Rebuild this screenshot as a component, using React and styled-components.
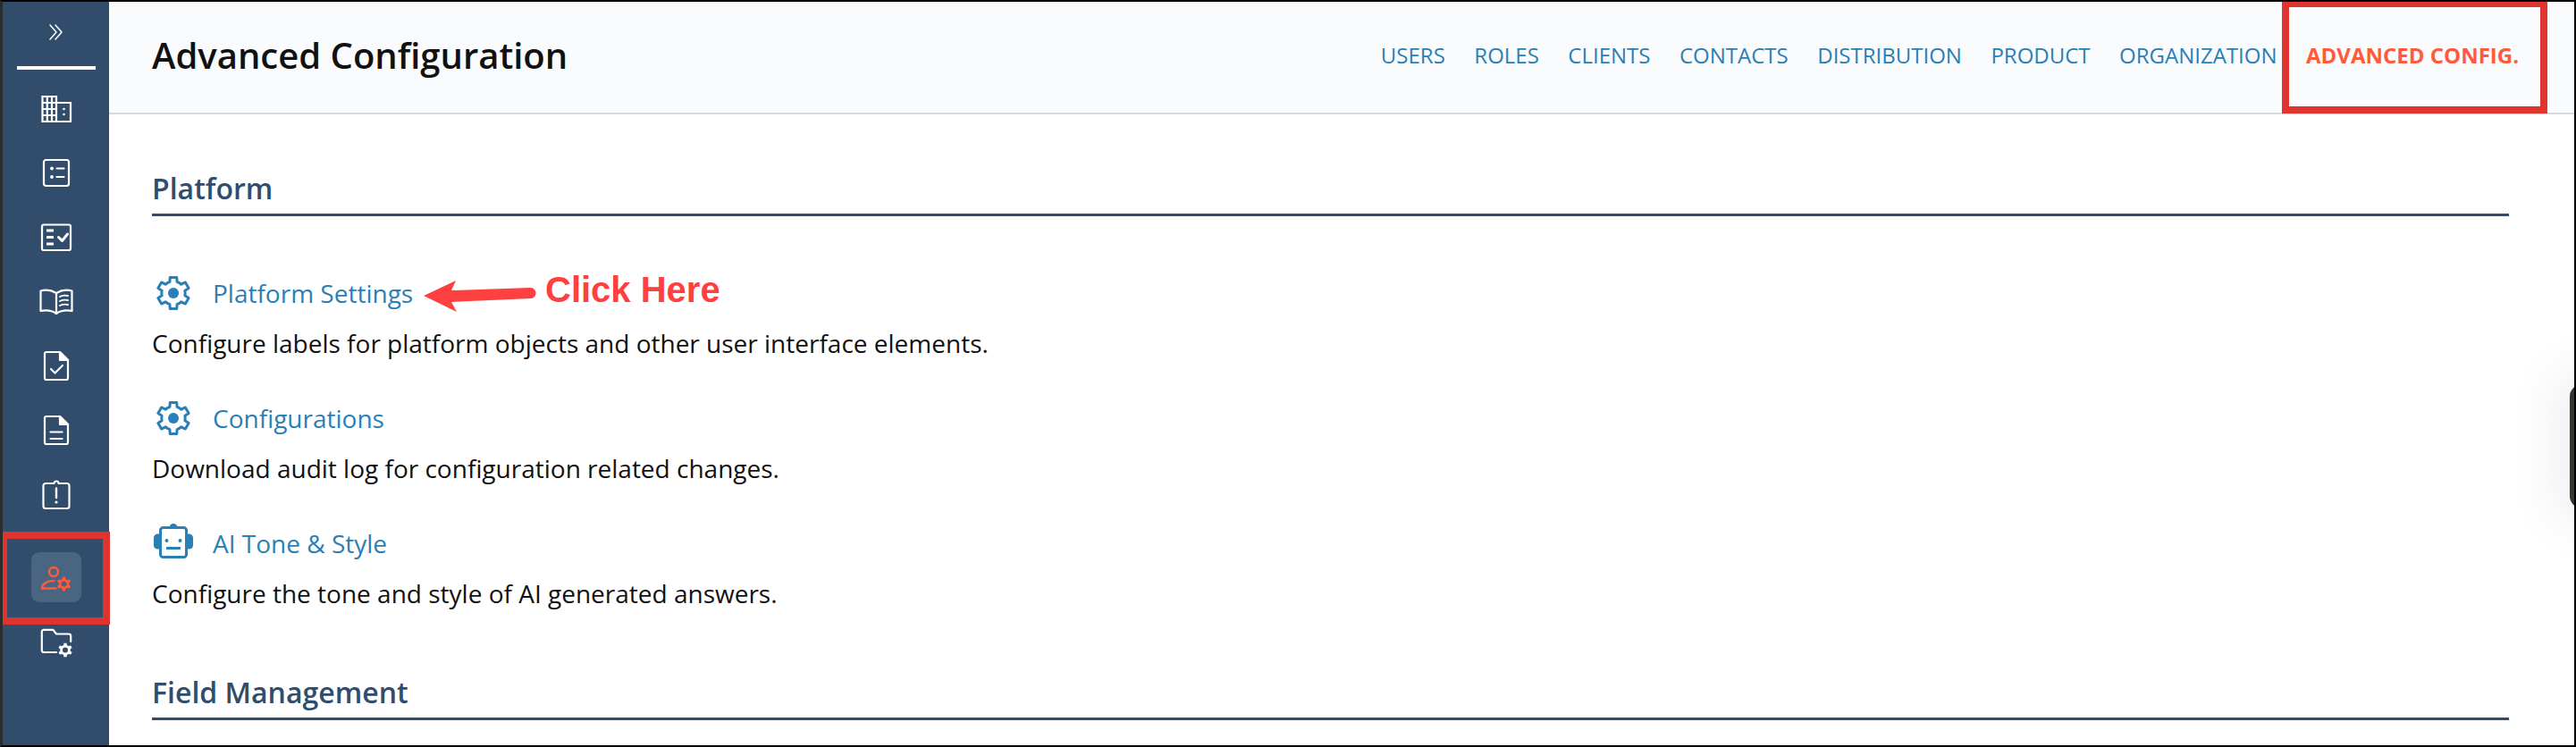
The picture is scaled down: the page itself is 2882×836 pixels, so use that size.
import React from 'react';
import styled, { createGlobalStyle } from 'styled-components';

const Global = createGlobalStyle`
  html, body { margin: 0; padding: 0; background: #fff; }
  * { box-sizing: border-box; }
  body { font-family: "Open Sans", "Liberation Sans", sans-serif; }
`;

const Frame = styled.div`
  position: relative; width: 2882px; height: 836px; overflow: hidden; display: flex; background: #fff;
  border-top: 2px solid #000; border-right: 2px solid #000; border-bottom: 2px solid #000; border-left: 3px solid #2a2c30;
`;
const Sidebar = styled.nav`
  width: 119px; flex: none; background: #314d6b; display: flex; flex-direction: column; align-items: center;
`;
const Toggle = styled.div`
  height: 72px; width: 100%; padding-bottom: 5px; display: flex; align-items: center; justify-content: center; color: #fff; flex: none;
`;
const Divider = styled.div`
  width: 88px; height: 4px; background: #fff; flex: none; margin-bottom: 8px;
`;
const SideItem = styled.div`
  width: 100%; height: 72px; flex: none; display: flex; align-items: center; justify-content: center;
  color: ${p => (p.$active ? '#ff5a3c' : '#fff')};
  margin-top: ${p => (p.$active ? '20px' : '0')};
`;
const ActiveTile = styled.div`
  width: 56px; height: 56px; border-radius: 9px; background: #4a6580; display: flex; align-items: center; justify-content: center;
`;
const Main = styled.div`
  flex: 1; min-width: 0; display: flex; flex-direction: column;
`;
const Header = styled.header`
  height: 126px; flex: none; background: #fafbfd; border-bottom: 2px solid #d0dcdf; display: flex; align-items: center; justify-content: space-between;
  padding: 0 62px 4px 48px;
`;
const Title = styled.h1`
  margin: 0; font-size: 40px; line-height: 54px; font-weight: 600; color: #111;
`;
const Tabs = styled.div`
  display: flex; gap: 32.5px; align-items: center;
`;
const Tab = styled.a`
  font-size: 24px; line-height: 32px; color: ${p => (p.$active ? '#ff5a3c' : '#2a7fb5')}; font-weight: ${p => (p.$active ? 700 : 400)};
`;
const Content = styled.main`
  padding: 63px 73px 0 48px;
`;
const SectionTitle = styled.h2`
  margin: 0; font-size: 32px; line-height: 40px; font-weight: 600; color: #2f4d6e; padding-bottom: 8px; border-bottom: 3px solid #314d6b;
`;
const Items = styled.div`
  padding: 62px 0 31px;
`;
const Item = styled.div`
  margin-bottom: 40px;
`;
const ItemLink = styled.a`
  display: flex; align-items: center; gap: 20px; height: 48px; font-size: 28px; color: #2a7fb5;
`;
const IconSlot = styled.span`
  width: 48px; height: 48px; flex: none; display: flex; align-items: center; justify-content: center;
`;
const Desc = styled.p`
  margin: 12px 0 0; font-size: 28px; line-height: 40px; color: #111;
`;
const Callout = styled.div`
  position: absolute; left: ${p => p.$x}px; top: ${p => p.$y}px; width: ${p => p.$w}px; height: ${p => p.$h}px;
  border: 8px solid #e0352f; pointer-events: none;
`;
const ArrowMark = styled.svg`
  position: absolute; left: 465px; top: 306px;
`;
const ClickHere = styled.div`
  position: absolute; left: 607px; top: 299px; font-family: "Liberation Sans", Arial, sans-serif; font-weight: 700; font-size: 40px; line-height: 46px; color: #ff4040;
`;
const Handle = styled.div`
  position: absolute; left: 2872px; top: 428px; width: 30px; height: 139px; border-radius: 14px; background: #33352f;
  box-shadow: 0 0 50px 24px rgba(0,0,0,0.05);
`;

const gearPath = (cx, cy, rOut, rIn, n = 6) => {
  const pts = [];
  const step = (Math.PI * 2) / n;
  for (let i = 0; i < n; i++) {
    const a = -Math.PI / 2 + i * step;
    const p = (r, d) => `${(cx + r * Math.cos(a + d)).toFixed(2)} ${(cy + r * Math.sin(a + d)).toFixed(2)}`;
    pts.push(p(rIn, -step * 0.3), p(rOut, -step * 0.2), p(rOut, step * 0.2), p(rIn, step * 0.3));
    pts.push(p(rIn, step * 0.5));
  }
  return `M${pts.join(' L')} Z`;
};
const holePath = (cx, cy, r) => `M${cx - r} ${cy} a${r} ${r} 0 1 0 ${2 * r} 0 a${r} ${r} 0 1 0 ${-2 * r} 0 Z`;

const SolidGear = ({ cx, cy }) => (
  <path d={`${gearPath(cx, cy, 8, 5.8, 6)} ${holePath(cx, cy, 3)}`} fill="currentColor" fillRule="evenodd" stroke="none" />
);

const Ic = ({ children, size = 40, sw = 2.2 }) => (
  <svg width={size} height={size} viewBox="0 0 40 40" fill="none" stroke="currentColor" strokeWidth={sw} strokeLinecap="round" strokeLinejoin="round">{children}</svg>
);

const fileOutline = (
  <>
    <path d="M9 4 H24 L33 13 V33 a2 2 0 0 1 -2 2 H9 a2 2 0 0 1 -2 -2 V6 a2 2 0 0 1 2 -2 Z" />
    <path d="M24 4 L33 13 H24 Z" fill="currentColor" />
  </>
);

const sideIcons = [
  <Ic key="b">
    <path d="M4.5 6 H20 V34 H4.5 Z M20 13 H36 V34 H20 M9.8 6 V34 M15 6 V34 M4.5 13 H20 M4.5 20 H20 M4.5 27 H20" strokeLinecap="square" strokeLinejoin="miter" />
    <circle cx="28.5" cy="20" r="1.3" fill="currentColor" stroke="none" />
    <circle cx="28.5" cy="26" r="1.3" fill="currentColor" stroke="none" />
  </Ic>,
  <Ic key="l">
    <rect x="6" y="5" width="28" height="29" rx="2.5" />
    <circle cx="15" cy="14.5" r="1.9" fill="currentColor" stroke="none" />
    <circle cx="15" cy="24" r="1.9" fill="currentColor" stroke="none" />
    <path d="M20.5 14.5 H28.5 M20.5 24 H28.5" />
  </Ic>,
  <Ic key="c">
    <rect x="4" y="5.5" width="32" height="28.5" rx="2" />
    <path d="M9 12 H17 M9 19.5 H17 M9 27 H17" strokeWidth="3" strokeLinecap="butt" />
    <path d="M22.5 19.5 L26.5 23.5 L32.5 16" strokeWidth="3" />
  </Ic>,
  <Ic key="bk">
    <path d="M20 10 C15 7 8 6 2.5 7.5 V30 C8 29 15 29.5 20 33 C25 29.5 32 29 37.5 30 V7.5 C32 6 25 7 20 10 Z M20 10 V33" />
    <path d="M24 14 C27 12.5 30 12.5 33 13 M24 19 C27 17.5 30 17.5 33 18 M24 24 C27 22.5 30 22.5 33 23" strokeWidth="1.8" />
  </Ic>,
  <Ic key="fc">{fileOutline}<path d="M14 23 L18.5 27.5 L27 19" /></Ic>,
  <Ic key="fl">{fileOutline}<path d="M13.5 21.5 H26.5 M13.5 29 H26.5" /></Ic>,
  <Ic key="ca">
    <path d="M17.5 7 H8 a2.5 2.5 0 0 0 -2.5 2.5 V32.5 a2.5 2.5 0 0 0 2.5 2.5 H32 a2.5 2.5 0 0 0 2.5 -2.5 V9.5 a2.5 2.5 0 0 0 -2.5 -2.5 H22.5 M17.5 7 a2.5 2.5 0 0 1 5 0" />
    <path d="M20 12.5 V23" strokeWidth="2.4" />
    <circle cx="20" cy="28" r="1.6" fill="currentColor" stroke="none" />
  </Ic>,
];

const userGear = (
  <Ic sw={2.4}>
    <circle cx="17" cy="14" r="5" />
    <path d="M17 24 C9.5 24 4 27.5 4 32.5 H19.5" />
    <SolidGear cx={28.5} cy={27.5} />
  </Ic>
);
const folderGear = (
  <Ic>
    <path d="M20 32 H6 a2.2 2.2 0 0 1 -2.2 -2.2 V9 a2.2 2.2 0 0 1 2.2 -2.2 H16.5 L20 11.5 H34 a2.2 2.2 0 0 1 2.2 2.2 V20" />
    <SolidGear cx={30} cy={29.5} />
  </Ic>
);

const LinkGear = () => (
  <svg width="48" height="48" viewBox="0 0 48 48" fill="none" stroke="currentColor" strokeWidth="3" strokeLinejoin="round">
    <path d={gearPath(24, 24, 18, 13.2, 6)} />
    <circle cx="24" cy="24" r="6" fill="currentColor" stroke="none" />
  </svg>
);
const LinkRobot = () => (
  <svg width="48" height="48" viewBox="0 0 48 48" fill="none">
    <rect x="9.5" y="6.5" width="29" height="33" rx="3" stroke="currentColor" strokeWidth="3" />
    <path d="M19.5 6 a4.5 4.5 0 0 1 9 0 Z M8 13 H6.5 A4.5 4.5 0 0 0 2 17.5 V26 A4.5 4.5 0 0 0 6.5 30 H8 Z M40 13 H41.5 A4.5 4.5 0 0 1 46 17.5 V26 A4.5 4.5 0 0 1 41.5 30 H40 Z" fill="currentColor" transform="translate(0 0.5)" />
    <circle cx="16.5" cy="21" r="2" fill="currentColor" />
    <circle cx="31.5" cy="21" r="2" fill="currentColor" />
    <rect x="16" y="28" width="16" height="3" fill="currentColor" />
  </svg>
);

const tabs = ['USERS', 'ROLES', 'CLIENTS', 'CONTACTS', 'DISTRIBUTION', 'PRODUCT', 'ORGANIZATION'];
const platform = [
  { icon: <LinkGear />, label: 'Platform Settings', desc: 'Configure labels for platform objects and other user interface elements.' },
  { icon: <LinkGear />, label: 'Configurations', desc: 'Download audit log for configuration related changes.' },
  { icon: <LinkRobot />, label: 'AI Tone & Style', desc: 'Configure the tone and style of AI generated answers.' },
];

export default function App() {
  return (
    <Frame>
      <Global />
      <Sidebar>
        <Toggle>
          <svg width="20" height="20" viewBox="0 0 20 20" fill="none" stroke="currentColor" strokeWidth="1.5" strokeLinecap="round" strokeLinejoin="round">
            <path d="M3 2 L10 10 L3 18 M9 2 L16 10 L9 18" />
          </svg>
        </Toggle>
        <Divider />
        {sideIcons.map((ic, i) => <SideItem key={i}>{ic}</SideItem>)}
        <SideItem $active><ActiveTile>{userGear}</ActiveTile></SideItem>
        <SideItem>{folderGear}</SideItem>
      </Sidebar>
      <Main>
        <Header>
          <Title>Advanced Configuration</Title>
          <Tabs>
            {tabs.map(t => <Tab key={t}>{t}</Tab>)}
            <Tab $active>ADVANCED CONFIG.</Tab>
          </Tabs>
        </Header>
        <Content>
          <SectionTitle>Platform</SectionTitle>
          <Items>
            {platform.map(it => (
              <Item key={it.label}>
                <ItemLink><IconSlot>{it.icon}</IconSlot>{it.label}</ItemLink>
                <Desc>{it.desc}</Desc>
              </Item>
            ))}
          </Items>
          <SectionTitle>Field Management</SectionTitle>
        </Content>
      </Main>
      <Callout $x={-3} $y={593} $w={123} $h={104} />
      <Callout $x={2550} $y={-2} $w={297} $h={127} />
      <ArrowMark width="140" height="48" viewBox="0 0 140 48">
        <path d="M6 23 L42 6 L37 17 L125 14 a6 6 0 0 1 1 12 L37 30 L43 41 Z" fill="#ff4040" />
      </ArrowMark>
      <ClickHere>Click Here</ClickHere>
      <Handle />
    </Frame>
  );
}
